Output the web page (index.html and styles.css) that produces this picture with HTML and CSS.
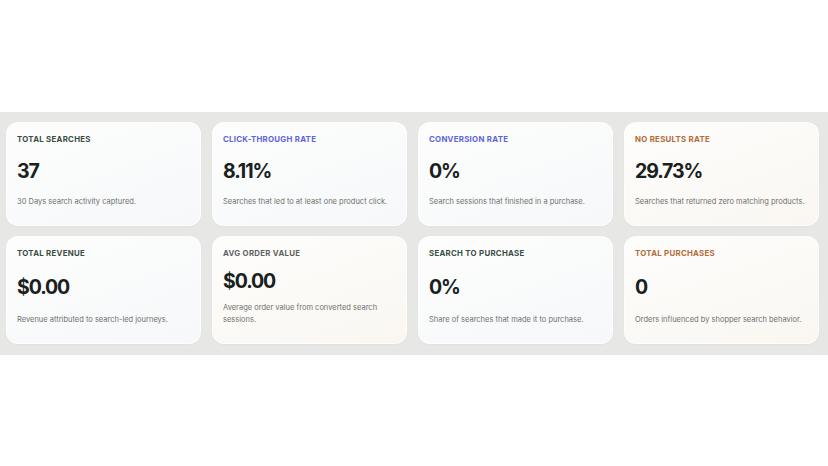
FILE: index.html
```html
<!DOCTYPE html>
<html lang="en">
<head>
    <meta charset="UTF-8">
    <meta name="viewport" content="width=device-width, initial-scale=1.0">
    <title>Search Analytics</title>
    <link rel="stylesheet" href="styles.css">
</head>
<body>
    <section class="stats">
        <div class="stats-grid">
            <div class="stat-card cool">
                <div class="stat-label">Total Searches</div>
                <div class="stat-value">37</div>
                <p class="stat-desc">30 Days search activity captured.</p>
            </div>
            <div class="stat-card cool">
                <div class="stat-label indigo">Click-Through Rate</div>
                <div class="stat-value">8.11%</div>
                <p class="stat-desc">Searches that led to at least one product click.</p>
            </div>
            <div class="stat-card cool">
                <div class="stat-label indigo">Conversion Rate</div>
                <div class="stat-value">0%</div>
                <p class="stat-desc">Search sessions that finished in a purchase.</p>
            </div>
            <div class="stat-card warm">
                <div class="stat-label amber">No Results Rate</div>
                <div class="stat-value">29.73%</div>
                <p class="stat-desc">Searches that returned zero matching products.</p>
            </div>

            <div class="stat-card cool">
                <div class="stat-label">Total Revenue</div>
                <div class="stat-value">$0.00</div>
                <p class="stat-desc">Revenue attributed to search-led journeys.</p>
            </div>
            <div class="stat-card warm">
                <div class="stat-label muted">Avg Order Value</div>
                <div class="stat-value">$0.00</div>
                <p class="stat-desc">Average order value from converted search sessions.</p>
            </div>
            <div class="stat-card cool">
                <div class="stat-label">Search to Purchase</div>
                <div class="stat-value">0%</div>
                <p class="stat-desc">Share of searches that made it to purchase.</p>
            </div>
            <div class="stat-card warm">
                <div class="stat-label amber">Total Purchases</div>
                <div class="stat-value">0</div>
                <p class="stat-desc">Orders influenced by shopper search behavior.</p>
            </div>
        </div>
    </section>
</body>
</html>
```

FILE: styles.css
```css
:root {
    --ink: #18211c;
    --label-green: #3a4d43;
    --label-indigo: #5d63d8;
    --label-amber: #b26b38;
    --label-muted: #5d625f;
    --desc: #6d716e;
    --band: #e7e7e6;
}

* {
    margin: 0;
    padding: 0;
    box-sizing: border-box;
    font-family: Inter, 'Noto Sans', sans-serif;
}

body {
    background-color: #ffffff;
    padding-top: 112px;
}

.stats {
    background-color: var(--band);
    padding: 10px 9px 11px 6px;
}

.stats-grid {
    display: grid;
    grid-template-columns: repeat(4, 1fr);
    column-gap: 11px;
    row-gap: 10px;
}

.stat-card {
    min-height: 104px;
    border-radius: 12px;
    padding: 10px 10px 17px;
    display: flex;
    flex-direction: column;
    border: 1px solid rgba(255,255,255,0.7);
    box-shadow: 0 1px 2px rgba(0,0,0,0.03);
}

.stat-card.cool {
    background: linear-gradient(160deg, #fdfdfd 0%, #f6f8f9 100%);
}

.stat-card.warm {
    background: linear-gradient(160deg, #fdfdfc 0%, #faf7f2 100%);
}

.stat-label {
    font-size: 7.8px;
    line-height: 12px;
    font-weight: 700;
    letter-spacing: 0.3px;
    text-transform: uppercase;
    color: var(--label-green);
}

.stat-label.indigo {
    color: var(--label-indigo);
}

.stat-label.amber {
    color: var(--label-amber);
}

.stat-label.muted {
    color: var(--label-muted);
}

.stat-value {
    flex: 1;
    min-height: 43px;
    display: flex;
    align-items: center;
    font-size: 19.5px;
    font-weight: 700;
    letter-spacing: -1.1px;
    color: var(--ink);
}

.stat-desc {
    font-size: 7.5px;
    line-height: 12px;
    color: var(--desc);
}
```
